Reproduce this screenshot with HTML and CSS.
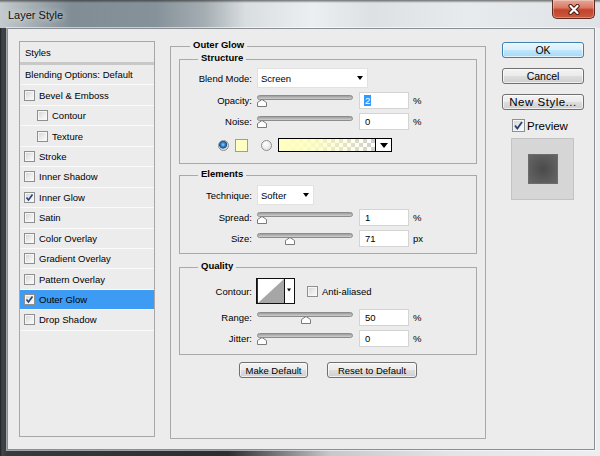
FILE: index.html
```html
<!DOCTYPE html>
<html lang="en">
<head>
<meta charset="utf-8">
<title>Layer Style</title>
<link rel="stylesheet" href="styles.css">
</head>
<body>
<div class="window">
  <div class="titlebar">
    <span class="title">Layer Style</span>
    <div class="close">
      <svg width="14" height="11" viewBox="0 0 14 11"><path d="M3.5 2 L10.5 9 M10.5 2 L3.5 9" stroke="#4a1c14" stroke-width="4.2" stroke-linecap="round"/><path d="M3.5 2 L10.5 9 M10.5 2 L3.5 9" stroke="#fff" stroke-width="2.2" stroke-linecap="round"/></svg>
    </div>
  </div>
  <div class="client">
    <ul class="styles">
      <li class="item head">Styles</li>
      <li class="item blend">Blending Options: Default</li>
      <li class="item"><span class="cb"></span>Bevel &amp; Emboss</li>
      <li class="item sub"><span class="cb"></span>Contour</li>
      <li class="item sub"><span class="cb"></span>Texture</li>
      <li class="item"><span class="cb"></span>Stroke</li>
      <li class="item"><span class="cb"></span>Inner Shadow</li>
      <li class="item"><span class="cb"><svg width="9" height="9" viewBox="0 0 9 9"><path d="M1.5 4.5 L3.5 7 L7.5 1.5" stroke="#23417a" stroke-width="1.6" fill="none"/></svg></span>Inner Glow</li>
      <li class="item"><span class="cb"></span>Satin</li>
      <li class="item"><span class="cb"></span>Color Overlay</li>
      <li class="item"><span class="cb"></span>Gradient Overlay</li>
      <li class="item"><span class="cb"></span>Pattern Overlay</li>
      <li class="item selected"><span class="cb"><svg width="9" height="9" viewBox="0 0 9 9"><path d="M1.5 4.5 L3.5 7 L7.5 1.5" stroke="#23417a" stroke-width="1.6" fill="none"/></svg></span>Outer Glow</li>
      <li class="item"><span class="cb"></span>Drop Shadow</li>
    </ul>

    <fieldset class="group main">
      <legend>Outer Glow</legend>

      <fieldset class="group sub-group structure">
        <legend>Structure</legend>
        <div class="row r-select">
          <span class="lbl">Blend Mode:</span>
          <div class="select w-blend"><span>Screen</span><i class="arrow"></i></div>
        </div>
        <div class="row r-slider first">
          <span class="lbl">Opacity:</span>
          <div class="slider"><div class="track"></div><svg class="thumb" style="left:0px" width="10" height="8" viewBox="0 0 10 8"><polygon points="0.5,7.5 0.5,3.5 5,0.5 9.5,3.5 9.5,7.5" fill="#fff" stroke="#7b7b7b"/></svg></div>
          <div class="num"><span class="sel">2</span></div>
          <span class="unit">%</span>
        </div>
        <div class="row r-slider">
          <span class="lbl">Noise:</span>
          <div class="slider"><div class="track"></div><svg class="thumb" style="left:0px" width="10" height="8" viewBox="0 0 10 8"><polygon points="0.5,7.5 0.5,3.5 5,0.5 9.5,3.5 9.5,7.5" fill="#fff" stroke="#7b7b7b"/></svg></div>
          <div class="num">0</div>
          <span class="unit">%</span>
        </div>
        <div class="row r-color">
          <span class="radio on"></span>
          <span class="swatch"></span>
          <span class="radio"></span>
          <div class="grad"><div class="grad-fill"></div><div class="grad-btn"><i class="arrow big"></i></div></div>
        </div>
      </fieldset>

      <fieldset class="group sub-group elements">
        <legend>Elements</legend>
        <div class="row r-select tech">
          <span class="lbl">Technique:</span>
          <div class="select w-tech"><span>Softer</span><i class="arrow"></i></div>
        </div>
        <div class="row r-slider first">
          <span class="lbl">Spread:</span>
          <div class="slider"><div class="track"></div><svg class="thumb" style="left:0px" width="10" height="8" viewBox="0 0 10 8"><polygon points="0.5,7.5 0.5,3.5 5,0.5 9.5,3.5 9.5,7.5" fill="#fff" stroke="#7b7b7b"/></svg></div>
          <div class="num">1</div>
          <span class="unit">%</span>
        </div>
        <div class="row r-slider">
          <span class="lbl">Size:</span>
          <div class="slider"><div class="track"></div><svg class="thumb" style="left:28px" width="10" height="8" viewBox="0 0 10 8"><polygon points="0.5,7.5 0.5,3.5 5,0.5 9.5,3.5 9.5,7.5" fill="#fff" stroke="#7b7b7b"/></svg></div>
          <div class="num">71</div>
          <span class="unit">px</span>
        </div>
      </fieldset>

      <fieldset class="group sub-group quality">
        <legend>Quality</legend>
        <div class="row r-contour">
          <span class="lbl">Contour:</span>
          <svg class="contour" width="39" height="26" viewBox="0 0 39 26">
            <rect x="0.5" y="0.5" width="38" height="25" fill="#fff" stroke="#111"/>
            <line x1="1.5" y1="1" x2="1.5" y2="25" stroke="#333"/>
            <polygon points="2,25 28,1 28,25" fill="#a6a6a6"/>
            <line x1="28.5" y1="1" x2="28.5" y2="25" stroke="#111"/>
            <polygon points="31,10.5 35,10.5 33,13.5" fill="#000"/>
          </svg>
          <span class="cb aa"></span><span class="aa-lbl">Anti-aliased</span>
        </div>
        <div class="row r-slider first">
          <span class="lbl">Range:</span>
          <div class="slider"><div class="track"></div><svg class="thumb" style="left:44px" width="10" height="8" viewBox="0 0 10 8"><polygon points="0.5,7.5 0.5,3.5 5,0.5 9.5,3.5 9.5,7.5" fill="#fff" stroke="#7b7b7b"/></svg></div>
          <div class="num">50</div>
          <span class="unit">%</span>
        </div>
        <div class="row r-slider">
          <span class="lbl">Jitter:</span>
          <div class="slider"><div class="track"></div><svg class="thumb" style="left:0px" width="10" height="8" viewBox="0 0 10 8"><polygon points="0.5,7.5 0.5,3.5 5,0.5 9.5,3.5 9.5,7.5" fill="#fff" stroke="#7b7b7b"/></svg></div>
          <div class="num">0</div>
          <span class="unit">%</span>
        </div>
      </fieldset>

      <div class="defaults">
        <div class="btn small w-make">Make Default</div>
        <div class="btn small w-reset">Reset to Default</div>
      </div>
    </fieldset>

    <div class="actions">
      <div class="btn primary">OK</div>
      <div class="btn">Cancel</div>
      <div class="btn newstyle">New Style...</div>
      <div class="preview-check"><span class="cb big"><svg width="11" height="11" viewBox="0 0 11 11"><path d="M2 5.5 L4.3 8.5 L9 2" stroke="#23417a" stroke-width="1.8" fill="none"/></svg></span><span>Preview</span></div>
      <div class="preview"><div class="preview-box"></div></div>
    </div>
  </div>
</div>
</body>
</html>
```

FILE: styles.css
```css
* { box-sizing: border-box; }
html, body { margin: 0; padding: 0; }
body {
  width: 600px;
  height: 456px;
  overflow: hidden;
  font-family: "Liberation Sans", Arial, sans-serif;
  font-size: 9.5px;
  color: #000;
}
.window {
  width: 600px;
  height: 456px;
  display: flex;
  flex-direction: column;
  background: linear-gradient(to right, #1e2123 0, #40464a 2px, #353a3d 7px, #2b2e30 38%, #6a6d70 45%, #c6c9cc 55%, #e2e5e7 75%, #eceef0 100%);
}
.titlebar {
  height: 28px;
  flex: none;
  display: flex;
  justify-content: space-between;
  align-items: flex-start;
  background:
    linear-gradient(to bottom, rgba(30,30,30,.6) 0, rgba(30,30,30,0) 3px),
    linear-gradient(to right, #c5cbce 0, #a7b0b5 5%, #808d95 12%, #86929a 26%, #a4adb2 34%, #d9dee1 41%, #eceff1 52%, #dde1e4 62%, #e8ebed 78%, #e0e3e5 100%);
}
.title {
  font-size: 11px;
  line-height: 13px;
  margin: 9px 0 0 8px;
  color: #111;
  text-shadow: 0 0 6px rgba(255,255,255,.9);
}
.close {
  width: 43px;
  height: 19px;
  margin-right: 5px;
  border: 1px solid #5d2a22;
  border-top: none;
  border-radius: 0 0 5px 5px;
  background: linear-gradient(#e6a898 0, #d87a64 42%, #c5432c 55%, #c95a3f 100%);
  box-shadow: inset 0 0 0 1px rgba(255,255,255,.3);
  display: flex;
  align-items: center;
  justify-content: center;
}
.client {
  flex: 1;
  margin: 0 5px 6px 7px;
  border: 1px solid #8a8f93;
  box-shadow: 0 0 0 1px rgba(255,255,255,.55);
  background: #ececec;
  display: flex;
  padding: 0 10px 0 11px;
}

/* styles list */
.styles {
  list-style: none;
  width: 136px;
  flex: none;
  margin: 12px 0;
  padding: 0;
  border: 1px solid #a7a7a7;
}
.item {
  height: 20.45px;
  border-bottom: 1px solid #fafafa;
  display: flex;
  align-items: center;
  padding-left: 4px;
  white-space: nowrap;
}
.item.head {
  height: 23px;
  border-bottom: 3px solid #c8c8c8;
  padding-left: 5px;
}
.item.blend { padding-left: 5px; }
.item.sub { padding-left: 17px; }
.item.selected { background: #3d9bf4; }

.cb {
  width: 11px;
  height: 11px;
  flex: none;
  margin-right: 4px;
  border: 1px solid #8e8f8f;
  background: linear-gradient(135deg, #d2d2d2 0, #ededed 55%, #fdfdfd 100%);
  box-shadow: inset 0 0 0 1px #f6f6f6;
  display: flex;
  align-items: center;
  justify-content: center;
}
.cb.big { width: 13px; height: 13px; margin-right: 2px; }

/* group boxes */
.group {
  margin: 0;
  padding: 0;
  border: 1px solid #a9a9a9;
  min-width: 0;
}
.group legend {
  font-weight: bold;
  font-size: 9.5px;
  line-height: 13px;
  padding: 0 3px 4px;
  color: #000;
}
.main {
  width: 316px;
  flex: none;
  margin: 9px 0 10px 15px;
  padding: 0 8px;
}
.main > legend { margin-left: 11px; }
.sub-group > legend { margin-left: 18px; }
.structure { margin-top: -4px; }
.elements { margin-top: 3px; padding-bottom: 4px; }
.quality { margin-top: 5px; padding-bottom: 5px; }

.row { display: flex; align-items: center; }
.lbl {
  width: 72px;
  flex: none;
  text-align: right;
  margin-right: 5px;
  white-space: nowrap;
}
.r-select { height: 20px; }
.r-select.tech { margin-top: 1px; }
.r-slider { height: 21px; }
.r-slider.first { margin-top: 2px; }
.quality .r-slider.first { margin-top: 3px; }

.select {
  height: 20px;
  background: #fff;
  border: 1px solid #e2e2e2;
  display: flex;
  align-items: center;
  justify-content: space-between;
  padding: 0 4px 0 3px;
}
.w-blend { width: 111px; }
.w-tech { width: 57px; }
.arrow {
  width: 0;
  height: 0;
  border-left: 3.5px solid transparent;
  border-right: 3.5px solid transparent;
  border-top: 4px solid #000;
}
.arrow.big {
  border-left-width: 4.5px;
  border-right-width: 4.5px;
  border-top-width: 5px;
}

.slider {
  position: relative;
  width: 96px;
  height: 17px;
  flex: none;
  margin-right: 6px;
}
.track {
  margin-top: 3px;
  height: 5px;
  border: 1px solid #8c8c8c;
  border-radius: 2.5px;
  background: linear-gradient(#9d9d9d, #cfcfcf);
}
.thumb {
  position: absolute;
  top: 7px;
}
.num {
  width: 50px;
  height: 17px;
  flex: none;
  background: #fff;
  border: 1px solid #d4d4d4;
  padding-left: 5px;
  display: flex;
  align-items: center;
}
.sel { background: #3399ff; color: #fff; padding: 0 1px; margin-left: -1px; }
.unit { margin-left: 4px; }

.r-color {
  height: 16px;
  margin-top: 5px;
  margin-bottom: 10px;
  padding-left: 38px;
}
.radio {
  width: 11px;
  height: 11px;
  flex: none;
  border-radius: 50%;
  border: 1px solid #8d8d8d;
  background: radial-gradient(circle at 40% 35%, #ffffff 0, #dcdcdc 100%);
}
.radio.on {
  background: radial-gradient(circle at 45% 40%, #8fd0ff 0, #2d7fc6 30%, #114d8e 50%, #d6d6d6 58%, #f2f2f2 100%);
}
.swatch {
  width: 13px;
  height: 13px;
  margin: 0 13px 0 6px;
  border: 1px solid #9d9d9d;
  background: #ffffc3;
}
.grad {
  width: 114px;
  height: 14px;
  margin-left: 6px;
  border: 1px solid #000;
  box-shadow: inset 1px 0 0 #000;
  display: flex;
}
.grad-fill {
  flex: 1;
  background:
    linear-gradient(to right, #ffffc0 0, rgba(255,255,192,.85) 35%, rgba(255,255,192,0) 100%),
    repeating-conic-gradient(#cfcfcf 0 25%, #ffffff 0 50%) 0 0 / 8px 8px;
}
.grad-btn {
  width: 16px;
  border-left: 1px solid #000;
  background: #fff;
  display: flex;
  align-items: center;
  justify-content: center;
}

.r-contour { height: 26px; margin-top: 2px; }
.contour { margin-left: -1px; flex: none; }
.cb.aa { margin-left: 12px; }

.defaults {
  display: flex;
  justify-content: center;
  gap: 19px;
  margin-top: 7px;
}

/* buttons */
.btn {
  height: 16px;
  border: 1px solid #707070;
  border-radius: 3px;
  background: linear-gradient(#f3f3f3 0, #ebebeb 48%, #dddddd 52%, #cfcfcf 100%);
  box-shadow: inset 0 0 0 1px rgba(255,255,255,.65);
  display: flex;
  align-items: center;
  justify-content: center;
  font-size: 10.5px;
  color: #000;
  white-space: nowrap;
}
.btn.small { font-size: 9.5px; }
.w-make { width: 69px; }
.w-reset { width: 90px; }
.btn.primary {
  border-color: #3c7fb1;
  background: linear-gradient(#eaf6fd 0, #d9f0fc 48%, #bee6fd 52%, #a7d9f5 100%);
}
.btn.newstyle { font-size: 11.5px; letter-spacing: 0.5px; }

.actions {
  width: 82px;
  flex: none;
  margin-left: 16px;
  padding-top: 13px;
  display: flex;
  flex-direction: column;
  gap: 10px;
}
.preview-check {
  display: flex;
  align-items: center;
  margin-left: 10px;
  margin-top: -1px;
  font-size: 11.5px;
  height: 13px;
}
.preview {
  width: 63px;
  height: 62px;
  margin: -4px 0 0 9px;
  background: #d6d6d6;
  border: 1px solid #c3c3c3;
  display: flex;
  align-items: center;
  justify-content: center;
}
.preview-box {
  width: 30px;
  height: 30px;
  border: 1px solid #6c6c6c;
  background: radial-gradient(circle, #4a4a4a 0, #575757 45%, #666666 100%);
}
```
